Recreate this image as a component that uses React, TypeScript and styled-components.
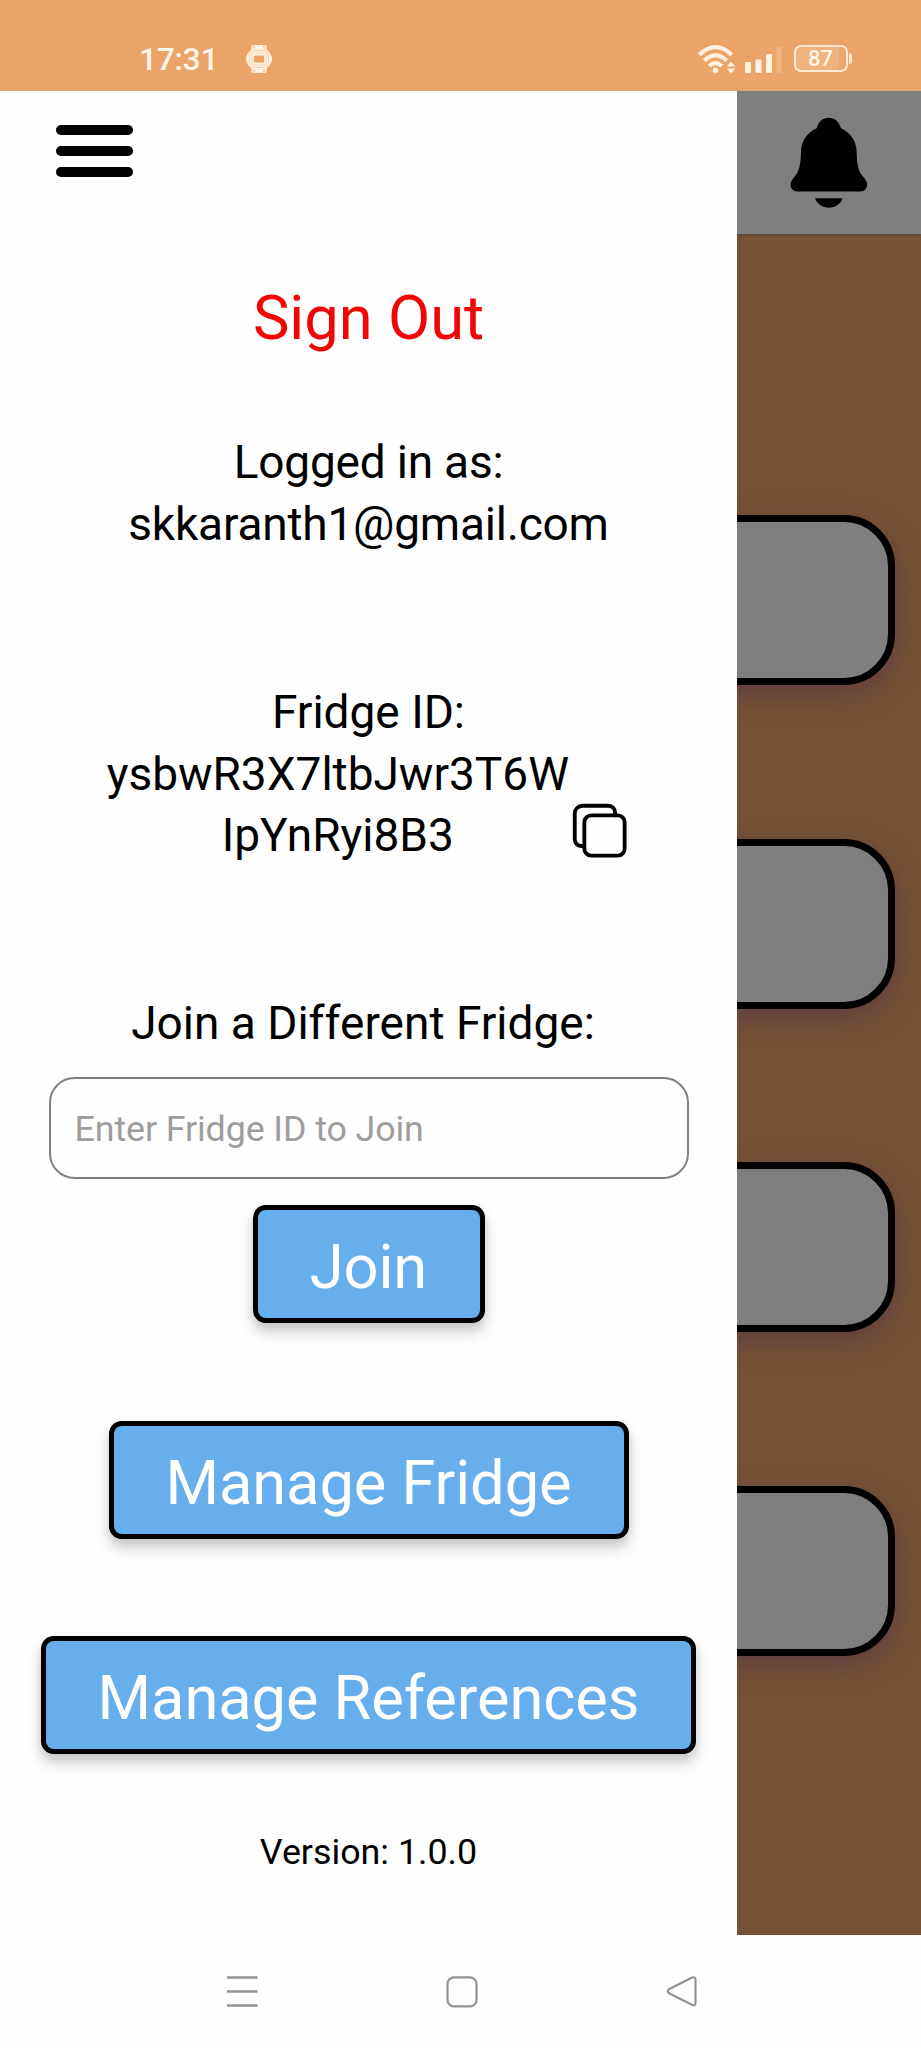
import React from "react";
import styled, { createGlobalStyle } from "styled-components";

const Global = createGlobalStyle`
  * { box-sizing: border-box; }
  body { margin: 0; background: #fefefe; font-family: Roboto, "Liberation Sans", sans-serif; }
  svg { display: block; flex: none; }
`;

const Phone = styled.div`
  width: 921px;
  height: 2048px;
  display: flex;
  flex-direction: column;
  overflow: hidden;
  background: #fefefe;
`;

const StatusBar = styled.header`
  height: 91px;
  flex: none;
  display: flex;
  align-items: center;
  padding: 26px 69px 0 139px;
  background: #eca367;
  color: #fff6ea;
`;

const Clock = styled.span`
  font-size: 32px;
  font-weight: 500;
  line-height: 36px;
  width: 106px;
  letter-spacing: -0.4px;
`;

const StatusIcons = styled.div`
  display: flex;
  align-items: center;
  margin-left: auto;
`;

const Battery = styled.div`
  width: 54px;
  height: 27px;
  margin-left: 12px;
  border: 2.5px solid #ffe9d2;
  border-radius: 7px;
  background: linear-gradient(90deg, #f0b27d 86%, #eca669 86%);
  font-size: 22px;
  font-weight: 500;
  line-height: 24px;
  text-align: center;
  padding-right: 1px;
`;

const BatteryTip = styled.div`
  width: 3px;
  height: 11px;
  margin-left: 1px;
  border-radius: 0 3px 3px 0;
  background: #ffe9d2;
`;

const Main = styled.main`
  position: relative;
  height: 1844px;
  flex: none;
  overflow: hidden;
  background: #eca367;
`;

const TopBar = styled.div`
  height: 143px;
  display: flex;
  justify-content: flex-end;
  padding: 26px 53px 0 0;
  background: #fff;
  box-shadow: 0 1px 3px rgba(0, 0, 0, 0.2);
`;

const CardList = styled.div`
  display: flex;
  flex-direction: column;
  gap: 153.5px;
  padding: 281px 26px 0;
`;

const Card = styled.div`
  height: 170px;
  border: 7.7px solid #000;
  border-radius: 51px;
  background: #fff;
  box-shadow: 0 9px 26px rgba(170, 100, 150, 0.62);
`;

const Scrim = styled.div`
  position: absolute;
  inset: 0;
  background: rgba(0, 0, 0, 0.5);
`;

const Drawer = styled.aside`
  position: absolute;
  top: 0;
  left: 0;
  width: 737px;
  height: 100%;
  display: flex;
  flex-direction: column;
  align-items: center;
  background: #fefefe;
  color: #000;
`;

const DrawerHeader = styled.div`
  align-self: stretch;
  height: 143px;
  flex: none;
  padding: 34px 56px;
`;

const MenuButton = styled.button`
  width: 77px;
  height: 52px;
  padding: 0;
  border: 0;
  background: none;
  display: flex;
  flex-direction: column;
  justify-content: space-between;
`;

const MenuLine = styled.span`
  height: 10px;
  width: 100%;
  border-radius: 5px;
  background: #000;
`;

const SignOut = styled.button`
  margin-top: 48px;
  padding: 0;
  border: 0;
  background: none;
  color: #f20505;
  font: 400 61.4px/72px Roboto, sans-serif;
`;

const Section = styled.section<{ $top: number }>`
  margin-top: ${(p) => p.$top}px;
  display: flex;
  flex-direction: column;
  align-items: center;
`;

const Line = styled.div<{ $tight?: boolean }>`
  font-size: 46px;
  line-height: 60px;
  letter-spacing: ${(p) => (p.$tight ? "-0.2px" : "0")};
  text-align: center;
  white-space: nowrap;
`;

const JoinLabel = styled(Line)`
  padding-right: 11px;
`;

const Value = styled(Line)`
  margin-top: 2px;
  line-height: 60.3px;
`;

const IdRow = styled.div`
  display: flex;
  align-items: flex-end;
`;

const CopyIcon = styled.svg`
  width: 61.4px;
  height: 61.4px;
  margin-bottom: 4px;
`;

const FridgeInput = styled.input`
  width: 640px;
  height: 102px;
  margin-top: 24px;
  padding: 2px 24px 0;
  border: 2.5px solid #808080;
  border-radius: 25.6px;
  outline: none;
  background: transparent;
  font: 400 35.8px Roboto, sans-serif;
  letter-spacing: -0.1px;
  &::placeholder {
    color: #9d9d9d;
    opacity: 1;
  }
`;

const Button = styled.button<{ $top: number; $width: number }>`
  flex: none;
  width: ${(p) => p.$width}px;
  height: 118px;
  margin-top: ${(p) => p.$top}px;
  padding: 7px 0 0;
  border: 5px solid #000;
  border-radius: 12.8px;
  background: #66aeec;
  color: #fff;
  font: 400 61.4px/72px Roboto, sans-serif;
  letter-spacing: -0.08px;
  white-space: nowrap;
  box-shadow: 0 9px 14px rgba(0, 0, 0, 0.2), 0 2px 10px rgba(0, 0, 0, 0.06);
`;

const Version = styled.div`
  margin-top: 75px;
  font-size: 35.8px;
  line-height: 46px;
`;

const NavBar = styled.nav`
  flex: 1;
  display: flex;
  justify-content: space-between;
  align-items: flex-start;
  padding: 40px 223px 0 226px;
`;

const ids = ["ysbwR3X7ltbJwr3T6W", "IpYnRyi8B3"];

const Watch = () => (
  <svg width="28" height="30" viewBox="0 0 28 30" fill="none">
    <rect x="6.5" y="1" width="15" height="28" rx="1.5" fill="#fff1e0" />
    <path d="M9 1.5v3M19 1.5v3M9 25.5v3M19 25.5v3" stroke="#eca367" strokeWidth="1" />
    <path d="M7 5h14l4 4 2 4v4l-2 4-4 4H7l-4-4-2-4v-4l2-4z" fill="#fff1e0" />
    <rect x="4.5" y="6.5" width="19" height="17" rx="5" stroke="#f5caa0" strokeWidth="0.9" />
    <rect x="7" y="9" width="14" height="12" rx="3" stroke="#f7d3b0" strokeWidth="0.9" />
    <rect x="9" y="11.5" width="10" height="7" rx="1" fill="#eca367" />
  </svg>
);

const Signal = () => (
  <svg width="84" height="30" viewBox="0 0 84 30" fill="none">
    <g stroke="#fff1e0" strokeWidth="4.2">
      <path d="M1.3 10.8Q17.5-4.5 33.7 10.8" />
      <path d="M6.3 16.6Q17.5 6.2 28.7 16.6" />
      <path d="M11.3 22Q17.5 16 23.7 22" />
    </g>
    <circle cx="17.5" cy="26.4" r="2.8" fill="#fff1e0" />
    <path d="M33 17.5l4.3 5h-8.6zM33 29.5l4.3-5h-8.6z" fill="#fff1e0" />
    <rect x="47" y="18" width="6" height="11" rx="1" fill="#fff1e0" />
    <rect x="57.5" y="15.5" width="6" height="13.5" rx="1" fill="#fff1e0" />
    <rect x="68" y="10" width="6" height="19" rx="1" fill="#fff1e0" />
    <rect x="78.5" y="3" width="5" height="26" rx="1" fill="#f0b480" />
  </svg>
);

const Bell = () => (
  <svg width="78" height="92" viewBox="0 0 78 92">
    <path d="M38.800 .7C33 .7 28.300 4.700 26.700 11.300C17 15.500 11.400 24 11 34C10.800 43 10.300 53 5.500 58.500C2.500 62 .5 64.500 .5 67.500C.5 71.500 3.200 74.400 7.200 74.400H70.400C74.400 74.400 77.100 71.500 77.100 67.500C77.100 64.500 75.100 62 72.100 58.500C67.300 53 66.800 43 66.600 34C66.200 24 60.600 15.500 50.900 11.300C49.300 4.700 44.600 .7 38.800 .7Z" />
    <path d="M25 81.300H52.700C50.200 87.300 45.200 90.700 38.800 90.700S27.500 87.300 25 81.300Z" />
  </svg>
);

export default function App() {
  return (
    <>
      <Global />
      <Phone>
        <StatusBar>
          <Clock>17:31</Clock>
          <Watch />
          <StatusIcons>
            <Signal />
            <Battery>87</Battery>
            <BatteryTip />
          </StatusIcons>
        </StatusBar>
        <Main>
          <TopBar>
            <Bell />
          </TopBar>
          <CardList>
            <Card />
            <Card />
            <Card />
            <Card />
          </CardList>
          <Scrim />
          <Drawer>
            <DrawerHeader>
              <MenuButton aria-label="Menu">
                <MenuLine />
                <MenuLine />
                <MenuLine />
              </MenuButton>
            </DrawerHeader>
            <SignOut>Sign Out</SignOut>
            <Section $top={78}>
              <Line $tight>Logged in as:</Line>
              <Value $tight>skkaranth1@gmail.com</Value>
            </Section>
            <Section $top={128}>
              <Line>Fridge ID:</Line>
              <IdRow>
                <Value>
                  {ids[0]}
                  <br />
                  {ids[1]}
                </Value>
                <CopyIcon viewBox="0 0 512 512" fill="none" stroke="#000" strokeWidth="32" strokeLinejoin="round" strokeLinecap="round">
                  <rect x="128" y="128" width="336" height="336" rx="57" />
                  <path d="M383.500 128l.500-24a56.160 56.160 0 0 0-56-56H112a64.190 64.190 0 0 0-64 64v216a56.160 56.160 0 0 0 56 56h24" />
                </CopyIcon>
              </IdRow>
            </Section>
            <Section $top={128}>
              <JoinLabel>Join a Different Fridge:</JoinLabel>
              <FridgeInput placeholder="Enter Fridge ID to Join" />
            </Section>
            <Button $top={26} $width={232}>Join</Button>
            <Button $top={98} $width={520}>Manage Fridge</Button>
            <Button $top={97} $width={655}>Manage References</Button>
            <Version>Version: 1.0.0</Version>
          </Drawer>
        </Main>
        <NavBar>
          <svg width="32" height="34" viewBox="0 0 32 34" stroke="#929292" strokeWidth="2.6">
            <path d="M1 2.500H31.500M1 16.500H31.500M1 30.500H31.500" />
          </svg>
          <svg width="32" height="34" viewBox="0 0 32 34" fill="none" stroke="#929292" strokeWidth="2.2">
            <rect x="1.5" y="2.4" width="29" height="29" rx="6.5" />
          </svg>
          <svg width="32" height="34" viewBox="0 0 32 34" fill="none" stroke="#929292" strokeWidth="2.2">
            <path d="M3 14.300L26 2.500Q29.500 1.500 29.500 5V28Q29.500 31 26.500 30L3 18.300Q.500 16.300 3 14.300Z" />
          </svg>
        </NavBar>
      </Phone>
    </>
  );
}
